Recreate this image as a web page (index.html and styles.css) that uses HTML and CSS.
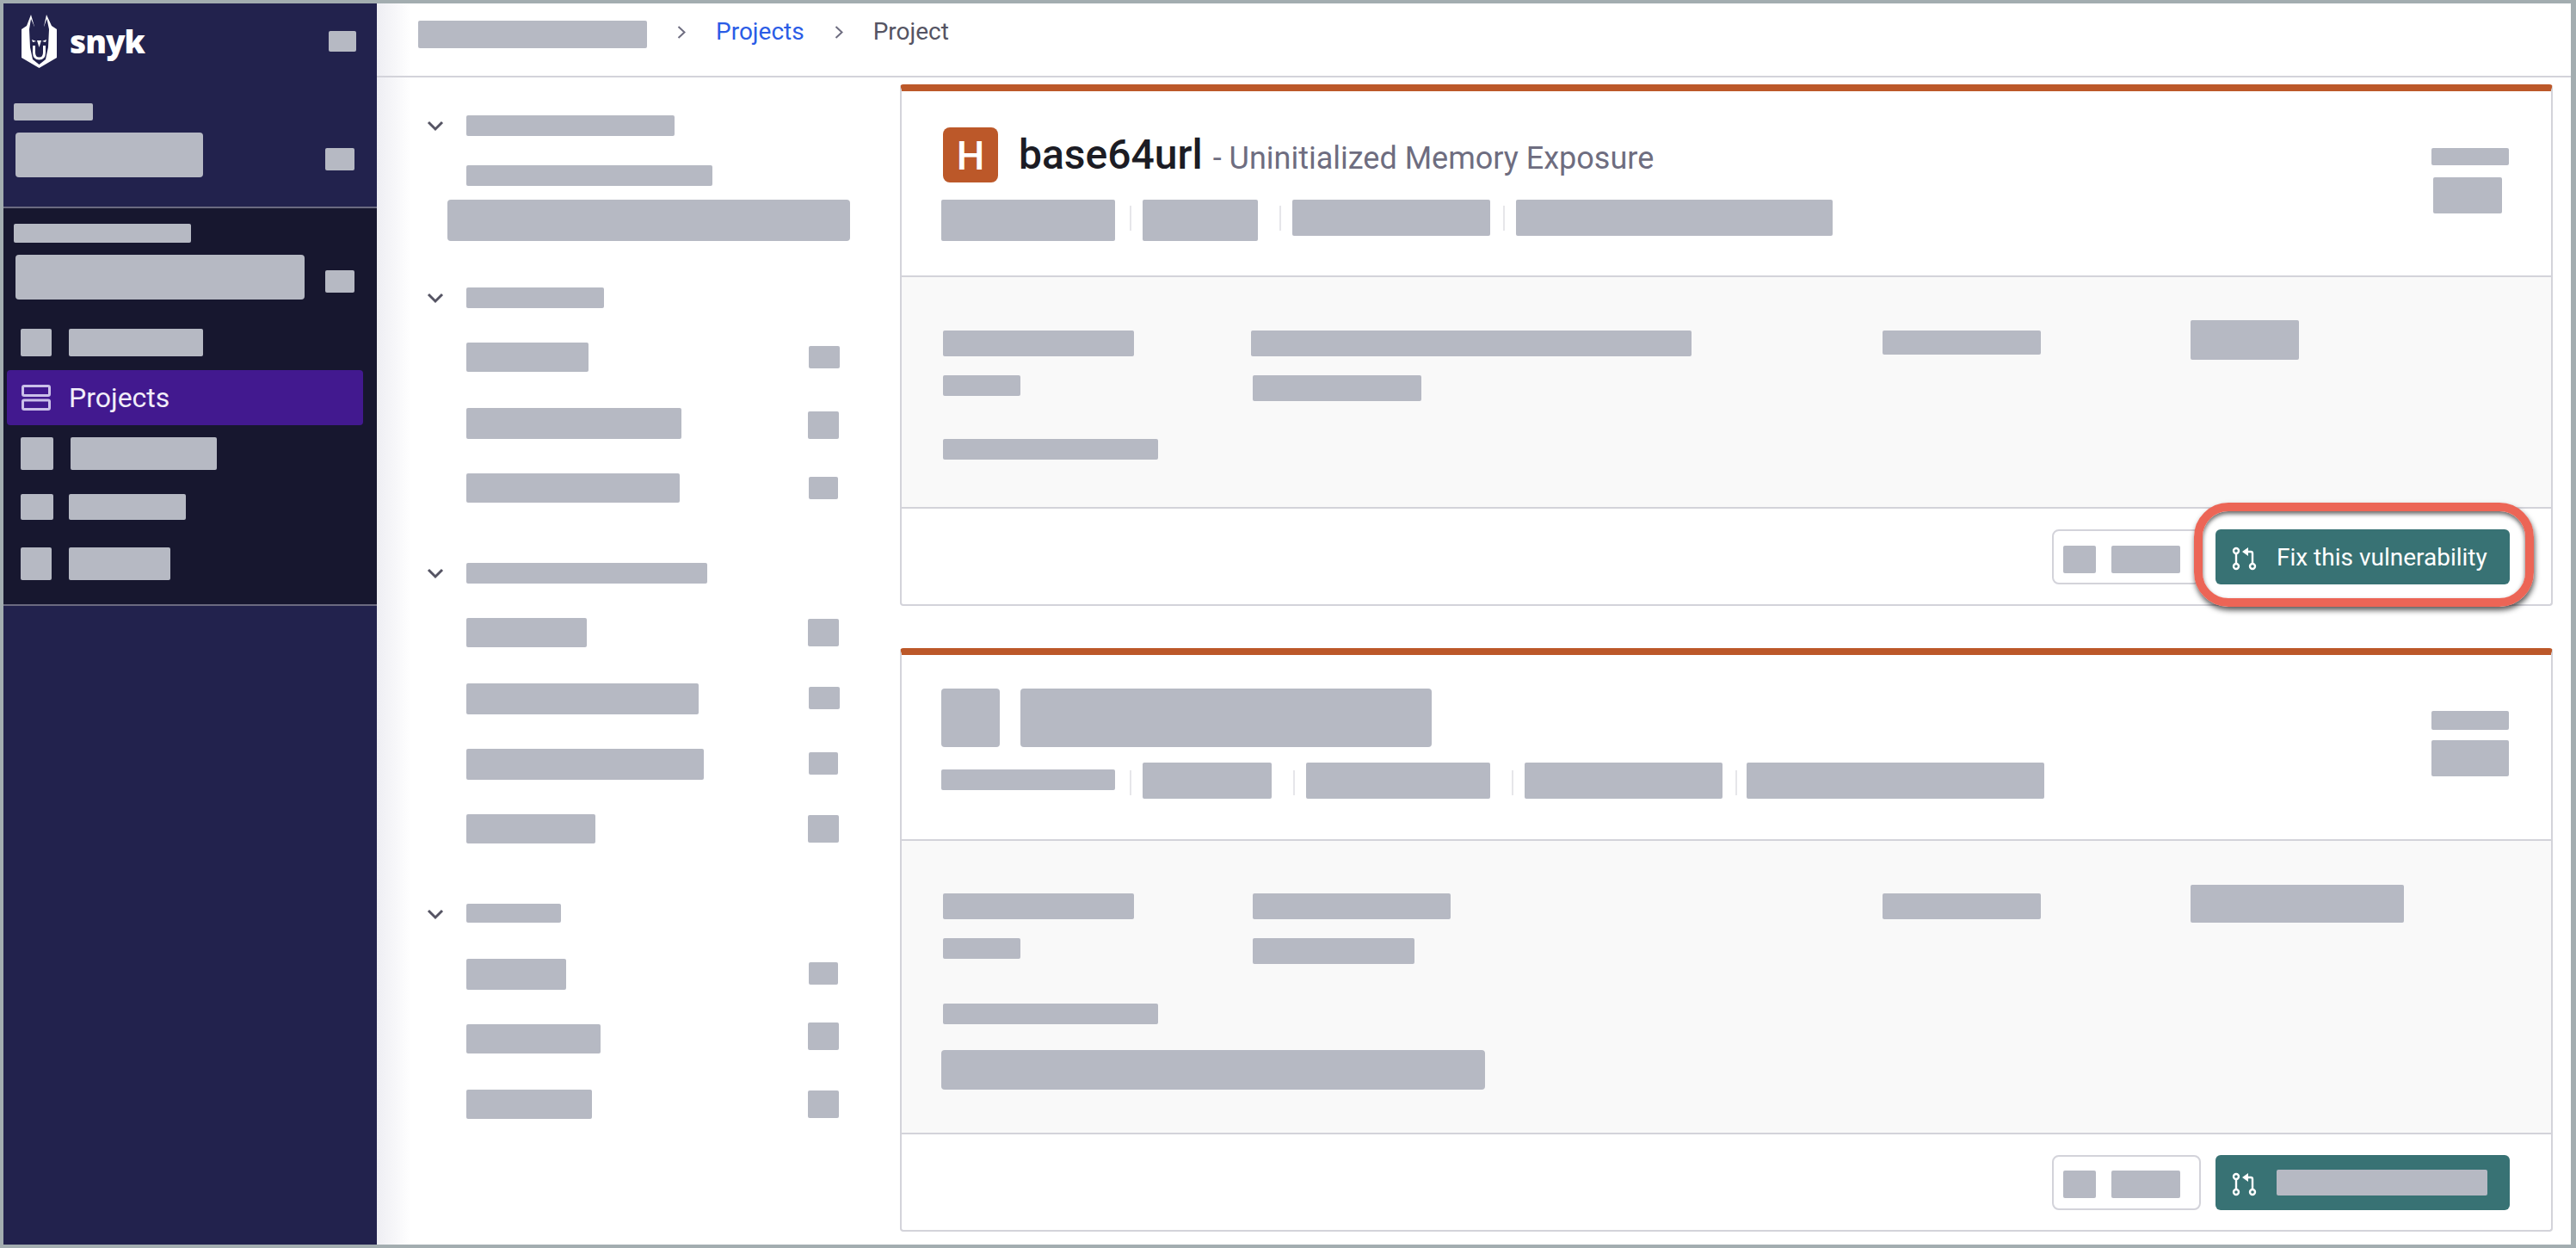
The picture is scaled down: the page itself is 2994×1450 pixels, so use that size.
FILE: index.html
```html
<!DOCTYPE html>
<html lang="en">
<head>
  <meta charset="UTF-8">
  <title>Project</title>
  <link rel="stylesheet" href="styles.css">
</head>
<body>
  <div class="frame">
    <aside class="sidebar">
      <section class="side-top">
        <div class="brand">
          <svg class="logo" viewBox="0 0 41 62">
            <path fill="#fff" d="M0 17 6 13 11 0 15 14H26L29 0 35 13 41 17V50L20.5 62 0 50Z"/>
            <path fill="#22224d" d="M11 5 9 17 10 38 13 52 20.5 58 28 52 31 38 32 17 29.500 5 26 14H15Z"/>
            <path fill="none" stroke="#fff" stroke-width="3" d="M14.500 36V44Q14.500 51 20.500 51 26.500 51 26.500 44V36"/>
            <path fill="#fff" d="M18 30H23L20.500 38ZM12 29 17 31 13 32ZM29 29 24 31 28 32Z"/>
          </svg>
          <span class="wordmark">snyk</span>
          <div class="ph h24 brand-ph" style="width:32px"></div>
        </div>
        <div class="ph h20 side-label" style="width:92px"></div>
        <div class="side-select">
          <div class="ph big h52" style="width:218px"></div>
          <div class="ph h26 side-caret" style="width:34px"></div>
        </div>
      </section>

      <section class="side-org">
        <div class="ph h22 side-label-org" style="width:206px"></div>
        <div class="side-select">
          <div class="ph big h52" style="width:336px"></div>
          <div class="ph h26 side-caret" style="width:34px"></div>
        </div>
        <nav class="nav">
          <div class="nav-row mt34">
            <div class="ph h32" style="width:36px"></div>
            <div class="ph h32" style="width:156px"></div>
          </div>
          <div class="nav-active">
            <svg class="nav-icon" viewBox="0 0 34 30">
              <rect x="1.5" y="1.5" width="31" height="11" rx="1.5"/>
              <rect x="1.5" y="18" width="31" height="10.5" rx="1.5"/>
            </svg>
            <span>Projects</span>
          </div>
          <div class="nav-row mt14">
            <div class="ph h38" style="width:38px"></div>
            <div class="ph h38" style="width:170px"></div>
          </div>
          <div class="nav-row mt28 tight">
            <div class="ph h30" style="width:38px"></div>
            <div class="ph h30" style="width:136px"></div>
          </div>
          <div class="nav-row mt32">
            <div class="ph h38" style="width:36px"></div>
            <div class="ph h38" style="width:118px"></div>
          </div>
        </nav>
      </section>
    </aside>

    <main class="main">
      <header class="topbar">
        <div class="ph h32" style="width:266px"></div>
        <svg class="crumb-sep" viewBox="0 0 10 15"><path d="M1.5 1 8.5 7.5 1.5 14"/></svg>
        <a class="crumb-link">Projects</a>
        <svg class="crumb-sep" viewBox="0 0 10 15"><path d="M1.5 1 8.5 7.5 1.5 14"/></svg>
        <span class="crumb-now">Project</span>
      </header>

      <div class="content">
        <div class="filters">
          <div class="group first">
            <div class="group-head">
              <svg class="chev" viewBox="0 0 20 13"><path d="M2 2 10 10 18 2"/></svg>
              <div class="ph h24" style="width:242px"></div>
            </div>
            <div class="ph h24 search-label" style="width:286px"></div>
            <div class="ph big h48 search-box" style="width:468px"></div>
          </div>

          <div class="group">
            <div class="group-head">
              <svg class="chev" viewBox="0 0 20 13"><path d="M2 2 10 10 18 2"/></svg>
              <div class="ph h24" style="width:160px"></div>
            </div>
            <div class="group-rows">
              <div class="row"><div class="ph h34" style="width:142px"></div><div class="ph count"></div></div>
              <div class="row"><div class="ph h36" style="width:250px"></div><div class="ph count tall"></div></div>
              <div class="row"><div class="ph h34" style="width:248px"></div><div class="ph count slim"></div></div>
            </div>
          </div>

          <div class="group">
            <div class="group-head">
              <svg class="chev" viewBox="0 0 20 13"><path d="M2 2 10 10 18 2"/></svg>
              <div class="ph h24" style="width:280px"></div>
            </div>
            <div class="group-rows">
              <div class="row"><div class="ph h34" style="width:140px"></div><div class="ph count tall high"></div></div>
              <div class="row"><div class="ph h36" style="width:270px"></div><div class="ph count"></div></div>
              <div class="row"><div class="ph h36" style="width:276px"></div><div class="ph count slim"></div></div>
              <div class="row"><div class="ph h34" style="width:150px"></div><div class="ph count tall high"></div></div>
            </div>
          </div>

          <div class="group">
            <div class="group-head">
              <svg class="chev" viewBox="0 0 20 13"><path d="M2 2 10 10 18 2"/></svg>
              <div class="ph h22" style="width:110px"></div>
            </div>
            <div class="group-rows">
              <div class="row"><div class="ph h36" style="width:116px"></div><div class="ph count slim"></div></div>
              <div class="row"><div class="ph h34" style="width:156px"></div><div class="ph count tall above"></div></div>
              <div class="row"><div class="ph h34" style="width:146px"></div><div class="ph count tall high"></div></div>
            </div>
          </div>
        </div>

        <div class="issues">
          <article class="card">
            <div class="card-head">
              <div class="head-main">
                <div class="title-row">
                  <span class="badge">H</span>
                  <h2 class="title">base64url <span class="subtitle">- Uninitialized Memory Exposure</span></h2>
                </div>
                <div class="meta-row">
                  <div class="ph h48" style="width:202px"></div>
                  <i class="sep mid"></i>
                  <div class="ph h48" style="width:134px"></div>
                  <i class="sep wide"></i>
                  <div class="ph h42" style="width:230px"></div>
                  <i class="sep"></i>
                  <div class="ph h42" style="width:368px"></div>
                </div>
              </div>
              <div class="head-side">
                <div class="ph h20" style="width:90px"></div>
                <div class="ph h42 side-score" style="width:80px"></div>
              </div>
            </div>
            <div class="details">
              <div class="col col-1">
                <div class="ph h30" style="width:222px"></div>
                <div class="ph h24 gap-22" style="width:90px"></div>
                <div class="ph h24 gap-50" style="width:250px"></div>
              </div>
              <div class="col col-2">
                <div class="ph h30 shift" style="width:512px"></div>
                <div class="ph h30 gap-22" style="width:196px"></div>
              </div>
              <div class="col col-3">
                <div class="ph h28" style="width:184px"></div>
              </div>
              <div class="col col-4">
                <div class="ph h46" style="width:126px"></div>
              </div>
            </div>
            <div class="card-foot">
              <div class="btn-plain">
                <div class="ph h32" style="width:38px"></div>
                <div class="ph h32" style="width:80px"></div>
              </div>
              <button class="btn-fix">
                <svg class="pr-icon" viewBox="0 0 27 26">
                  <circle cx="4" cy="4" r="3"/><path d="M4 7V19"/><circle cx="4" cy="22" r="3"/>
                  <path class="solid" d="M11 5 18 0V10Z"/><path d="M17 5H21A2 2 0 0 1 23 7V19"/><circle cx="23" cy="22" r="3"/>
                </svg>
                <span>Fix this vulnerability</span>
                <span class="callout"></span>
              </button>
            </div>
          </article>

          <article class="card card-b">
            <div class="card-head">
              <div class="head-main">
                <div class="title-row">
                  <div class="ph big h68" style="width:68px"></div>
                  <div class="ph big h68 title-ph" style="width:478px"></div>
                </div>
                <div class="meta-row">
                  <div class="ph h24 meta-low" style="width:202px"></div>
                  <i class="sep mid"></i>
                  <div class="ph h42" style="width:150px"></div>
                  <i class="sep wide"></i>
                  <div class="ph h42" style="width:214px"></div>
                  <i class="sep wide"></i>
                  <div class="ph h42" style="width:230px"></div>
                  <i class="sep close"></i>
                  <div class="ph h42" style="width:346px"></div>
                </div>
              </div>
              <div class="head-side">
                <div class="ph h22" style="width:90px"></div>
                <div class="ph h42 side-score wide-score" style="width:90px"></div>
              </div>
            </div>
            <div class="details">
              <div class="col col-1">
                <div class="ph h30" style="width:222px"></div>
                <div class="ph h24 gap-22" style="width:90px"></div>
                <div class="ph h24 gap-52" style="width:250px"></div>
                <div class="ph big h46 advice" style="width:632px"></div>
              </div>
              <div class="col col-2">
                <div class="ph h30" style="width:230px"></div>
                <div class="ph h30 gap-22" style="width:188px"></div>
              </div>
              <div class="col col-3">
                <div class="ph h30" style="width:184px"></div>
              </div>
              <div class="col col-4">
                <div class="ph h44" style="width:248px"></div>
              </div>
            </div>
            <div class="card-foot">
              <div class="btn-plain">
                <div class="ph h32" style="width:38px"></div>
                <div class="ph h32" style="width:80px"></div>
              </div>
              <button class="btn-fix">
                <svg class="pr-icon" viewBox="0 0 27 26">
                  <circle cx="4" cy="4" r="3"/><path d="M4 7V19"/><circle cx="4" cy="22" r="3"/>
                  <path class="solid" d="M11 5 18 0V10Z"/><path d="M17 5H21A2 2 0 0 1 23 7V19"/><circle cx="23" cy="22" r="3"/>
                </svg>
                <div class="ph h30" style="width:245px"></div>
              </button>
            </div>
          </article>
        </div>
      </div>
    </main>
  </div>
</body>
</html>
```

FILE: styles.css
```css
* {
  box-sizing: border-box;
}
html, body {
  margin: 0;
  height: 100%;
}
body {
  font-family: Roboto, "Liberation Sans", sans-serif;
  overflow: hidden;
}

.frame {
  display: flex;
  width: 2994px;
  height: 1450px;
  border: 4px solid #a3adb0;
  border-right-width: 6px;
  background: #fff;
}

/* redacted placeholders */
.ph {
  flex: none;
  background: #b6b9c3;
  border-radius: 2px;
}
.ph.big {
  border-radius: 4px;
}
.h20 { height: 20px; }
.h22 { height: 22px; }
.h24 { height: 24px; }
.h26 { height: 26px; }
.h28 { height: 28px; }
.h30 { height: 30px; }
.h32 { height: 32px; }
.h34 { height: 34px; }
.h36 { height: 36px; }
.h38 { height: 38px; }
.h42 { height: 42px; }
.h44 { height: 44px; }
.h46 { height: 46px; }
.h48 { height: 48px; }
.h52 { height: 52px; }
.h68 { height: 68px; }

/* sidebar */
.sidebar {
  flex: none;
  width: 434px;
  background: #22224d;
}
.side-top {
  height: 238px;
  padding-top: 13px;
  border-bottom: 2px solid #6b6a80;
}
.brand {
  display: flex;
  align-items: flex-start;
  height: 62px;
  padding-left: 21px;
}
.logo {
  width: 41px;
  height: 62px;
}
.wordmark {
  margin-left: 15px;
  color: #fff;
  font-family: "Open Sans", sans-serif;
  font-weight: 800;
  font-size: 37px;
  line-height: 62px;
  letter-spacing: -1px;
}
.brand-ph {
  margin: 19px 24px 0 auto;
}
.side-label {
  margin: 41px 0 0 12px;
}
.side-select {
  display: flex;
  align-items: flex-start;
  margin: 14px 26px 0 14px;
}
.side-caret {
  margin: 18px 0 0 auto;
}
.side-org {
  height: 462px;
  padding-top: 18px;
  background: #17172f;
  border-bottom: 2px solid #6b6a80;
}
.side-label-org {
  margin-left: 12px;
}
.nav-row {
  display: flex;
  gap: 20px;
  margin-left: 20px;
}
.nav-row.tight {
  gap: 18px;
}
.mt14 { margin-top: 14px; }
.mt28 { margin-top: 28px; }
.mt32 { margin-top: 32px; }
.mt34 { margin-top: 34px; }
.nav-active {
  display: flex;
  align-items: center;
  gap: 21px;
  height: 64px;
  margin: 16px 16px 0 4px;
  padding-left: 17px;
  background: #42198f;
  border-radius: 4px;
  color: #f1edf9;
  font-size: 32px;
}
.nav-icon {
  width: 34px;
  height: 30px;
  fill: none;
  stroke: #cabfe9;
  stroke-width: 3;
}

/* main column */
.main {
  display: flex;
  flex-direction: column;
  flex: 1;
  min-width: 0;
  background: linear-gradient(to right, #eeeef3, #fff 40px);
}
.topbar {
  display: flex;
  align-items: flex-start;
  gap: 35px;
  flex: none;
  height: 86px;
  padding: 20px 0 0 48px;
  border-bottom: 2px solid #d3d3da;
  font-size: 28px;
  line-height: 26px;
}
.crumb-sep {
  width: 10px;
  height: 15px;
  margin-top: 6px;
  fill: none;
  stroke: #6e6d80;
  stroke-width: 2;
}
.crumb-link {
  color: #2a5ce6;
}
.crumb-now {
  color: #555463;
}

.content {
  display: flex;
  flex: 1;
  min-height: 0;
}

/* filter panel */
.filters {
  flex: none;
  width: 608px;
  padding: 44px 70px 0 58px;
}
.group {
  margin-bottom: 28px;
}
.group.first {
  margin-bottom: 54px;
}
.group-head {
  display: flex;
  align-items: center;
  gap: 26px;
  height: 24px;
}
.group-head .ph {
  align-self: flex-start;
}
.chev {
  flex: none;
  width: 20px;
  height: 13px;
  margin-top: 1px;
  fill: none;
  stroke: #555463;
  stroke-width: 3;
}
.search-label {
  margin: 34px 0 0 46px;
}
.search-box {
  margin: 16px 0 0 24px;
}
.group-rows {
  margin-top: 40px;
}
.row {
  display: flex;
  align-items: flex-start;
  justify-content: space-between;
  height: 76px;
  padding-left: 46px;
}
.count {
  width: 36px;
  height: 26px;
  margin-top: 4px;
}
.count.tall {
  height: 32px;
  margin-right: 1px;
}
.count.high {
  margin-top: 1px;
}
.count.above {
  margin-top: -2px;
}
.count.slim {
  width: 34px;
  margin-right: 2px;
}

/* issue cards */
.issues {
  flex: none;
  width: 1921px;
  padding-top: 8px;
}
.card {
  margin-bottom: 49px;
  background: #fff;
  border: 2px solid #d3d3da;
  border-top: 8px solid #bc5829;
  border-radius: 4px;
}
.card-head {
  display: flex;
  justify-content: space-between;
  height: 216px;
  border-bottom: 2px solid #d3d3da;
}
.head-main {
  padding-top: 42px;
}
.title-row {
  display: flex;
  align-items: center;
  height: 64px;
  margin-left: 48px;
}
.badge {
  width: 64px;
  height: 64px;
  margin-right: 24px;
  background: #bc5829;
  border-radius: 8px;
  color: #fff;
  font-size: 46px;
  font-weight: 500;
  line-height: 66px;
  text-align: center;
}
.title {
  margin: 4px 0 0;
  color: #1c1c24;
  font-size: 48px;
  font-weight: 500;
  line-height: 64px;
}
.subtitle {
  color: #6e6d80;
  font-size: 36px;
  font-weight: 400;
}
.meta-row {
  display: flex;
  align-items: flex-start;
  margin: 20px 0 0 46px;
}
.sep {
  flex: none;
  width: 2px;
  height: 29px;
  margin: 7px 13px 0 15px;
  background: #e6e6ea;
}
.sep.mid {
  margin-left: 17px;
}
.sep.wide {
  margin-left: 25px;
}
.sep.close {
  margin-right: 11px;
}
.head-side {
  display: flex;
  flex-direction: column;
  align-items: flex-end;
  padding: 66px 49px 0 0;
}
.side-score {
  margin: 14px 8px 0 0;
}

.details {
  display: flex;
  height: 269px;
  padding: 50px 0 0 48px;
  background: #f9f9f9;
  border-bottom: 2px solid #d3d3da;
}
.col {
  flex: none;
  margin-top: 12px;
}
.col-1 { width: 360px; }
.col-2 { width: 732px; }
.col-3 { width: 358px; }
.col-4 { margin-top: 0; }
.shift {
  margin-left: -2px;
}
.gap-22 { margin-top: 22px; }
.gap-50 { margin-top: 50px; }
.gap-52 { margin-top: 52px; }

.card-foot {
  display: flex;
  justify-content: flex-end;
  gap: 17px;
  height: 111px;
  padding: 24px 48px 0 0;
}
.btn-plain {
  display: flex;
  align-items: flex-start;
  gap: 18px;
  width: 173px;
  height: 64px;
  padding: 17px 0 0 11px;
  background: #fff;
  border: 2px solid #d3d3da;
  border-radius: 8px;
}
.btn-fix {
  position: relative;
  display: flex;
  align-items: center;
  gap: 24px;
  width: 342px;
  height: 64px;
  padding: 0 0 0 20px;
  background: #387274;
  border: 0;
  border-radius: 6px;
  color: #fff;
  font-family: inherit;
  font-size: 28px;
}
.pr-icon {
  flex: none;
  width: 27px;
  height: 26px;
  margin-top: 4px;
  fill: none;
  stroke: #fff;
  stroke-width: 2.4;
  overflow: visible;
}
.pr-icon .solid {
  fill: #fff;
  stroke: none;
}
.callout {
  position: absolute;
  top: -31px;
  right: -28px;
  bottom: -26px;
  left: -25px;
  border: 10px solid #ec6556;
  border-radius: 40px;
  box-shadow: 1px 4px 6px rgba(0, 0, 0, 0.65), inset 0 3px 5px rgba(0, 0, 0, 0.6);
}

/* second card has its own spacing */
.card-b .head-main {
  padding-top: 39px;
}
.card-b .title-row {
  height: 68px;
  margin-left: 46px;
}
.title-ph {
  margin-left: 24px;
}
.card-b .meta-row {
  margin-top: 18px;
}
.card-b .sep {
  margin-top: 9px;
}
.meta-low {
  margin-top: 8px;
}
.card-b .head-side {
  padding-top: 65px;
}
.card-b .side-score {
  margin: 12px 0 0;
}
.card-b .details {
  height: 341px;
  padding-top: 51px;
}
.card-b .col {
  margin-top: 10px;
}
.card-b .col-4 {
  margin-top: 0;
}
.card-b .btn-plain {
  padding-top: 16px;
}
.advice {
  margin: 30px 0 0 -2px;
}
```
